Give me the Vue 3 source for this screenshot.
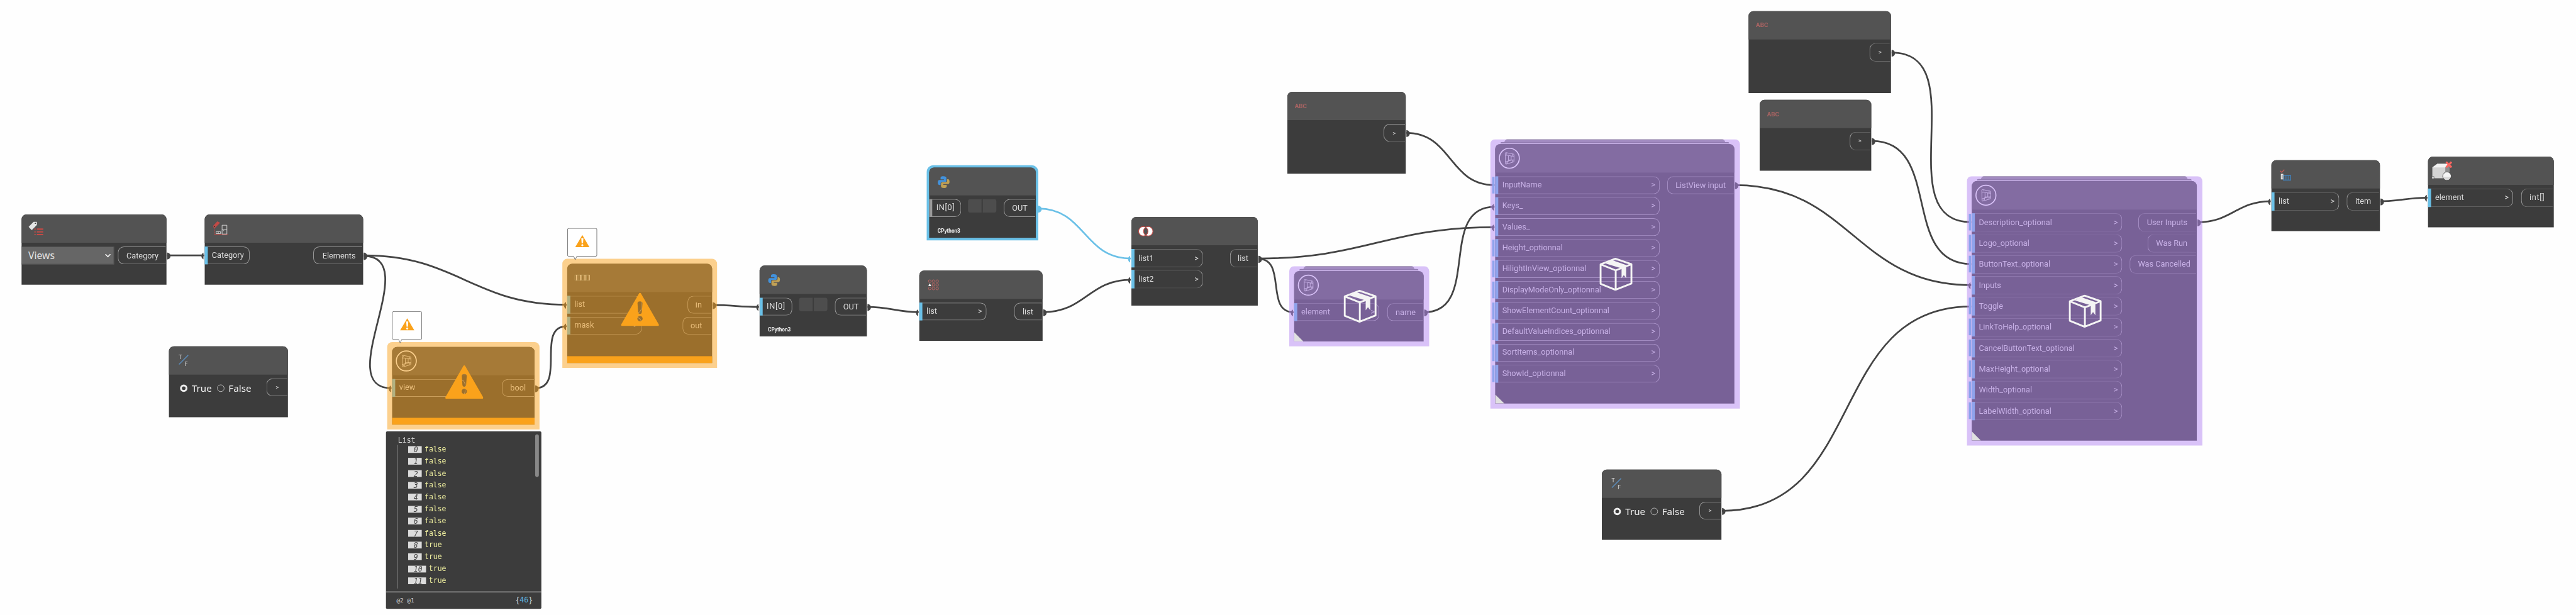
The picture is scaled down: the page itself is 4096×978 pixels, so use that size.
<script setup>
const gt = (w, n) => n.map((t) => ({ t, w, gt: true }))

const nodes = [
  { id: 'categories', x: 35, y: 348, w: 235, h: 114, icon: 'tag', select: 'Views', outs: [{ t: 'Category', w: 79, p: 13 }] },
  { id: 'elements', x: 332, y: 348, w: 257, h: 114, icon: 'cabinet', ins: [{ t: 'Category', w: 73 }], outs: [{ t: 'Elements', w: 81, p: 14 }] },
  { id: 'bool-a', x: 274, y: 562, w: 193, h: 115, icon: 'tf', radio: 'a', outs: [{ t: '>', w: 35, p: 14, sm: true }] },
  { id: 'bool-b', x: 2598, y: 762, w: 194, h: 114, icon: 'tf', radio: 'b', outs: [{ t: '>', w: 36, p: 14, sm: true }] },
  { id: 'filter', x: 920, y: 428, w: 235, h: 161, icon: 'stripes', state: 'warn', sign: [1038, 475], bubble: [920, 370],
    ins: [{ t: 'list', w: 121, gt: true }, { t: 'mask', w: 121, gt: true }], outs: [{ t: 'in', w: 40, p: 12 }, { t: 'out', w: 48, p: 12 }] },
  { id: 'is-view', x: 636, y: 563, w: 231, h: 126, icon: 'custom', state: 'warn', sign: [752.5, 593], bubble: [636, 505],
    ins: [{ t: 'view', w: 119, gt: true }], outs: [{ t: 'bool', w: 53, p: 12.5 }] },
  { id: 'python-a', x: 1232, y: 431, w: 174, h: 115, icon: 'python', engine: true, ins: [{ t: 'IN[0]', w: 53, wide: true }], outs: [{ t: 'OUT', w: 52, p: 12.5 }] },
  { id: 'python-b', x: 1507, y: 272, w: 173, h: 114, icon: 'python', engine: true, state: 'selected', ins: [{ t: 'IN[0]', w: 52, wide: true }], outs: [{ t: 'OUT', w: 52, p: 12.5 }] },
  { id: 'flatten', x: 1491, y: 439, w: 200, h: 114, icon: 'grid', ins: gt(109, ['list']), outs: [{ t: 'list', w: 46, p: 12.5 }] },
  { id: 'union', x: 1835, y: 352, w: 205, h: 144, icon: 'union', dim: true, ins: gt(116, ['list1', 'list2']), outs: [{ t: 'list', w: 45, p: 11.5 }] },
  { id: 'string-a', x: 2088, y: 149, w: 192, h: 133, icon: 'abc', outs: [{ t: '>', w: 36, p: 13.5, sm: true }] },
  { id: 'string-b', x: 2836, y: 18, w: 231, h: 133, icon: 'abc', dim: true, outs: [{ t: '>', w: 35, p: 13.5, sm: true }] },
  { id: 'string-c', x: 2854, y: 162, w: 181, h: 115, icon: 'abc', dim: true, outs: [{ t: '>', w: 35, p: 13, sm: true }] },
  { id: 'name', x: 2099, y: 440, w: 210, h: 114, icon: 'custom', state: 'package', box: [2179, 470],
    ins: gt(138, ['element']), outs: [{ t: 'name', w: 59, p: 12.5 }] },
  { id: 'list-view', x: 2425, y: 234, w: 388, h: 421, icon: 'custom', state: 'package', box: [2594, 417.5], noStub: [1, 2],
    ins: gt(267, ['InputName', 'Keys_', 'Values_', 'Height_optionnal', 'HilightInView_optionnal', 'DisplayModeOnly_optionnal', 'ShowElementCount_optionnal', 'DefaultValueIndices_optionnal', 'SortItems_optionnal', 'ShowId_optionnal']),
    outs: [{ t: 'ListView input', w: 109, p: 12.5 }] },
  { id: 'form', x: 3198, y: 294, w: 365, h: 421, icon: 'custom', state: 'package', box: [3355, 478], noStub: [3], dim: true,
    ins: gt(244, ['Description_optional', 'Logo_optional', 'ButtonText_optional', 'Inputs', 'Toggle', 'LinkToHelp_optional', 'CancelButtonText_optional', 'MaxHeight_optional', 'Width_optional', 'LabelWidth_optional']),
    outs: [{ t: 'User Inputs', w: 95, p: 13 }, { t: 'Was Run', w: 80, p: 13 }, { t: 'Was Cancelled', w: 109, p: 12.5 }] },
  { id: 'item', x: 3684, y: 260, w: 176, h: 115, icon: 'check', dim: true, ins: gt(109.5, ['list']), outs: [{ t: 'item', w: 54, p: 13 }] },
  { id: 'ids', x: 3938, y: 254, w: 204, h: 115, icon: 'cube', dim: true, ins: gt(138, ['element']), outs: [{ t: 'int[]', w: 53.5, p: 13, wide: true }] },
]

const links = [
  [271, 414.5, 331, 414.5], [590, 414.5, 919, 494.5], [590, 415.5, 635, 630], [868, 630, 919, 529.5],
  [1156, 495, 1231, 498], [1407, 498, 1490, 506.5], [1692, 506.5, 1834, 454], [1684, 338.5, 1834, 419.5, 'sel'],
  [2041, 419.5, 2424, 368.7], [2041, 420, 2098, 506.7], [2310, 506.7, 2424, 335.5], [2281, 215.7, 2424, 300.3, 'bare'],
  [2814, 300.5, 3197, 462.7], [3068, 85.3, 3197, 360.5, 'bare'], [3036, 228.8, 3197, 428.5, 'bare'],
  [2793, 829, 3197, 497.3, 'bare'], [3564, 360.7, 3683, 326.6], [3861, 326.6, 3937, 320.7],
]
const curve = ([a, b, c, d]) => {
  const k = 0.45 * Math.hypot(c - a, d - b)
  return `M${a},${b} C${a + k},${b} ${c - k},${d} ${c},${d}`
}
const head = ([a, b]) => `M${a},${b - 4.5} h1 c6,1 6,10 0,11 h-1z`
const tail = ([, , c, d]) => `M${c - 1},${d - 4.5} c-4.5,2 -4.5,9 0,11z`

const rows = ['false', 'false', 'false', 'false', 'false', 'false', 'false', 'false', 'true', 'true', 'true', 'true']
const px = (v) => v + 'px'
const rect = (n) => ({ left: px(n.x), top: px(n.y), width: px(n.w), height: px(n.h) })
const at = ([x, y]) => ({ left: px(x), top: px(y) })
</script>

<template>
  <main class="viewport">
    <div class="canvas">
      <svg class="wires" width="4178" height="998" viewBox="0 0 4178 998">
        <g v-for="(l, i) in links" :key="i" :class="['wire', { sel: l[4] === 'sel' }]">
          <path class="line" :d="curve(l)" />
          <path class="dot" :d="head(l)" />
          <path v-if="l[4] !== 'bare'" class="dot" :d="tail(l)" />
        </g>
      </svg>

      <article v-for="n in nodes" :key="n.id" :class="['node', n.state, { dim: n.dim }]" :style="rect(n)">
        <template v-if="n.state === 'package'">
          <i class="tab tab-back"></i>
          <i class="tab tab-mid"></i>
        </template>
        <div class="card">
          <header class="head">
            <svg width="60" height="46" viewBox="0 0 60 46" fill="none">
              <g v-if="n.icon === 'tag'">
                <path d="M11.4 20 L19.5 12 H24.8 V17 L16.5 25.5z" fill="#e6e6e6" />
                <circle cx="22.3" cy="14.4" r="1" fill="#444" />
                <path d="M20.8 23.8h2M24.8 23.8h10.3M20.8 28.2h2M24.8 28.2h10.3M20.8 32.6h2M24.8 32.6h10.3" stroke="#c24a46" stroke-width="2.1" />
              </g>
              <g v-else-if="n.icon === 'cabinet'">
                <path d="M14 18 L20.5 11.3 L25 13.5 L17 21.7 L14 21z" fill="#c24a46" />
                <circle cx="16" cy="19.5" r="1" fill="#333" />
                <path d="M15.8 22v10" stroke="#c24a46" stroke-dasharray="2 1" />
                <path d="M15.5 32.7h22" stroke="#c24a46" stroke-width="1.2" />
                <path d="M28.2 17.5h7.8v14.3h-7.8zM28.2 24.5h7.8M18.5 27.8h7.2v3.4h-7.2zM22 27.8v3.4M30 26.3h1.5" stroke="#d5d5d5" />
              </g>
              <g v-else-if="n.icon === 'tf'">
                <path d="M16.3 29.3 L31.3 14.2" stroke="#5b8fc0" stroke-width="1.4" />
                <text x="15.8" y="20.3" class="tf">T</text>
                <text x="25.4" y="32" class="tf">F</text>
              </g>
              <g v-else-if="n.icon === 'stripes'">
                <path d="M12.5 18.3h23.5v8.2h-23.5zM19 18v9M23 18v9M27 18v9M31 18v9" stroke="#7d9296" />
                <path d="M15.3 18v9M22 18v9M28.8 18v9M35.5 18v9" stroke="#fff" stroke-width="1.5" />
              </g>
              <g v-else-if="n.icon === 'custom'" stroke="#fff">
                <circle cx="23" cy="22.8" r="16.2" stroke-width="1.7" />
                <path stroke-width=".9" opacity=".85" d="M16.3 14.4q.3-1 1.5-.7L29.6 16q1 .3 1 1.3V27.6q0 1-1 1.3L18 32.3q-1.3.3-1.4-1zM16.4 17.8l3.6.2 8 1.5M28 16v3.500h2.600M28 25.500h2.600M28 25.500v3.500M21.500 18.800v6.800h5.500M26 19v6.600M21.500 25.600l-1.500 6M16.500 28.600l11.500-3.200" />
                <path stroke-width="1.2" d="M18 15.8h.8M28.8 17.700h.8M28.800 27.200h.8M17.800 30.500h.8" />
              </g>
              <g v-else-if="n.icon === 'python'">
                <path fill="#4292dc" d="M23 14c-4 0-4.5 1.3-4.5 3v2H24v1.2h-7.3c-2 0-2.7 1.8-2.7 4s.7 4 2.5 4h2v-2.6c0-1.5 1-2.4 2.6-2.4h4.7c1.4 0 2.2-.8 2.2-2.2v-4c0-2-1.5-3-5-3z" />
                <path fill="#bfa055" d="M24 33c4 0 4.5-1.3 4.5-3v-2H23v-1.2h7.3c2 0 2.7-1.8 2.7-4s-.7-4-2.5-4h-1.3v2.6c0 1.5-1 2.4-2.6 2.4h-4.7c-1.4 0-2.7.8-2.7 2.2v4c0 2 1.3 3 4.8 3z" />
              </g>
              <g v-else-if="n.icon === 'grid'" stroke="#b86462" stroke-width="1">
                <template v-for="x in [17, 23, 29]" :key="x">
                  <circle :cx="x" cy="17.3" r="2.2" />
                  <circle :cx="x" cy="29.2" r="2.2" />
                </template>
                <path d="M21 21.2h4v4h-4z" />
                <circle cx="29" cy="23.2" r="2.2" />
                <path d="M17 20.6l2.4 4.6h-4.8z" fill="#fff" stroke="none" />
              </g>
              <g v-else-if="n.icon === 'union'">
                <circle cx="19.3" cy="23.3" r="7.6" fill="#fff" />
                <circle cx="27.3" cy="23.3" r="7.6" fill="#fff" />
                <path d="M23.3 16.8a7.6 7.6 0 0 1 0 13a7.6 7.6 0 0 1 0-13z" fill="#535353" />
                <circle cx="19.3" cy="23.3" r="7.6" stroke="#c24a46" stroke-width="1.1" />
                <circle cx="27.3" cy="23.3" r="7.6" stroke="#c24a46" stroke-width="1.1" />
              </g>
              <text v-else-if="n.icon === 'abc'" x="12" y="26.3" class="abc">ABC</text>
              <g v-else-if="n.icon === 'check'">
                <path d="M14.3 17.3l2.4 2.4 4.3-4.5" stroke="#c85a55" stroke-width="1.3" />
                <path d="M19.3 24.8h12v7.5h-12zM22.2 24.5v8M25.2 24.5v8M28.2 24.5v8" stroke="#3f87c8" stroke-width="1.2" />
                <path d="M16 22.8h2.6v7.6h-2.6z" stroke="#eee" stroke-width="1.3" />
              </g>
              <g v-else>
                <path d="M7 17.7 L15 11.7 H35 V29 L28 35.3 H7z" fill="#d4d4d4" />
                <path d="M7 17.7 L15 11.7 H35 L28 17.7z" fill="#f2f2f2" />
                <path d="M28 17.7 L35 11.7 V29 L28 35.3z" fill="#8d8d8d" />
                <path d="M6.3 32.6h3.4v3.4h-3.4z" fill="#eee" stroke="#444" stroke-width=".7" />
                <circle cx="30.7" cy="32" r="6.8" fill="#d9d9d9" stroke="#444" />
                <path d="M24.6 33a6.2 6.2 0 1 1 12.2 0z" fill="#f5f5f5" />
                <path d="M29.5 9l8.6 8.6M38.1 9l-8.6 8.6" stroke="#fb6560" stroke-width="3.2" />
              </g>
            </svg>
          </header>
          <div class="body">
            <div v-if="n.select" class="select">
              <span>{{ n.select }}</span>
              <svg width="10" height="8" viewBox="0 0 10 8"><path d="M1 1.5l4 4 4-4" fill="none" stroke="#fff" stroke-width="1.5" /></svg>
            </div>
            <div v-if="n.radio" :class="['radios', n.radio]">
              <i class="radio on"></i><span class="yes">True</span><i class="radio"></i><span>False</span>
            </div>
            <div v-if="n.ins" class="ins">
              <div v-for="(p, i) in n.ins" :key="p.t" :class="['port', 'in', { wide: p.wide }]" :style="{ width: px(p.w) }">
                <i v-if="n.noStub && !n.noStub.includes(i)" class="stub"></i>
                <span>{{ p.t }}</span><b v-if="p.gt">&gt;</b>
              </div>
            </div>
            <div v-if="n.engine" class="buttons"><i></i><i></i></div>
            <div class="outs">
              <div v-for="p in n.outs" :key="p.t" :class="['port', 'out', { sm: p.sm, wide: p.wide }]" :style="{ width: px(p.w - 1), paddingLeft: px(p.p) }">{{ p.t }}</div>
            </div>
          </div>
          <footer v-if="n.engine" class="engine">CPython3</footer>
        </div>
        <i v-if="n.state === 'warn' || n.state === 'package'" class="veil"></i>
        <i v-if="n.state === 'warn'" class="bar"></i>
        <i v-if="n.state === 'package'" class="corner"></i>
      </article>

      <template v-for="n in nodes" :key="n.id + '-mark'">
        <svg v-if="n.sign" class="mark sign" :style="at(n.sign)" width="62" height="54" viewBox="0 0 62 54">
          <path fill="#faa21b" fill-rule="evenodd" d="M29.5 1q1.5-2 3 0L61.5 51.5q.8 2.5-1.5 2.5H2q-2.3 0-1.5-2.5zM27 17.5q-.3-3.5 4-3.5t4 3.5L34 31.5q-.3 3-3 3t-3-3zM31 37.8a4.3 4.3 0 1 0 .01 0z" />
        </svg>
        <svg v-if="n.box" class="mark" :style="at(n.box)" width="54" height="54" viewBox="0 0 54 54">
          <path fill="none" stroke="#f4f4f4" stroke-width="3" stroke-linejoin="round" d="M26 1.8L52 10.8V42L26 52.2 2 42.5V11zM2 11l24.5 9.8L52 10.8M26.5 20.8V52" />
          <path fill="#f4f4f4" d="M10 9.5L21 4.3 43.5 12V33.5L39.7 28.5 36 33.5V17.5z" />
        </svg>
        <svg v-if="n.bubble" class="mark" :style="at(n.bubble)" width="50" height="54" viewBox="0 0 50 54">
          <path fill="#fff" stroke="#777" d="M2.5.5H46q2 0 2 2V44q0 2-2 2H15.5l-2.5 5.5L10.5 46H2.5q-2 0-2-2V2.5q0-2 2-2z" />
          <path fill="#faa21b" d="M24.5 11.5L36 31H13z" />
          <path fill="#fff" d="M22.8 16.8h3.4l-.6 8.2h-2.2zM24.5 26.3a1.7 1.7 0 1 0 .01 0z" />
        </svg>
      </template>

      <section class="preview">
        <div class="scroll">
          <p class="title">List</p>
          <ol>
            <li v-for="(r, i) in rows" :key="i"><em :class="{ long: i > 9 }">{{ i }}</em><span>{{ r }}</span></li>
          </ol>
          <i class="thumb"></i>
        </div>
        <footer><span>@2 @1</span><span class="count">{<b>46</b>}</span></footer>
      </section>
    </div>
  </main>
</template>

<style>
html, body { margin: 0; background: #fefefe; overflow: hidden; }
</style>

<style scoped>
.viewport { width: 4096px; height: 978px; overflow: hidden; background: #fefefe; }
.canvas { position: relative; width: 4178px; height: 998px; transform: scale(0.98037, 0.97996); transform-origin: 0 0; font-family: Roboto, sans-serif; font-size: 13px; color: #dcdcdc; }
.canvas * { box-sizing: border-box; }
.wires { position: absolute; inset: 0; }
.line { fill: none; stroke: #444; stroke-width: 2.8; }
.dot { fill: #444; }
.sel .line { stroke: #6ac0e7; }
.sel .dot { fill: #6ac0e7; }

.node { position: absolute; }
.card { height: 100%; background: #3c3c3c; border-radius: 8px 8px 0 0; position: relative; }
.selected::before { content: ''; position: absolute; inset: -4px; background: #6ac0e7; border-radius: 11px 11px 0 0; }
.head { height: 46px; background: #535353; border-radius: 8px 8px 0 0; }
.head svg { display: block; }
.selected .head { height: 45px; overflow: hidden; }
.body { display: flex; padding-top: 6px; }
.ins, .outs { display: flex; flex-direction: column; gap: 5px; }
.outs { margin-left: auto; margin-right: 1px; align-items: flex-end; }
.port { height: 29px; border: 1px solid #9a9a9a; line-height: 28px; white-space: nowrap; position: relative; }
.in { display: flex; justify-content: space-between; padding: 0 6px 0 11.5px; border-left: 0; border-radius: 0 10px 10px 0; line-height: 25.5px; }
.in::before { content: ''; position: absolute; left: 0; top: -1px; bottom: -1px; width: 5px; background: #6ac0e7; }
.in b { font-weight: 400; }
.out { border-right: 0; border-radius: 10px 0 0 10px; }
.wide { letter-spacing: 0.65px; }
.sm { font-size: 10px; }
.dim .ins, .dim .outs { gap: 4px; }
.dim .port { height: 30px; border-top-color: #6a6a6a; border-bottom-color: #6a6a6a; }
.dim .in { line-height: 28px; }
.selected .in::before { background: #999; }
.stub { position: absolute; left: -5px; top: 0; width: 4px; height: 27px; background: #6ac0e7; }

.tf { font: 9.5px "Noto Sans", sans-serif; fill: #dadada; }
.abc { font: 700 10px Roboto, sans-serif; fill: #ab6463; }

.select { width: 150px; height: 29px; background: #666; border: 1px solid #555; border-left: 0; padding: 0 4px 0 11px; display: flex; align-items: center; justify-content: space-between; font: 16px/29px "Noto Sans", sans-serif; color: #e4e4e4; }
.radios { display: flex; align-items: center; height: 29px; margin: 1.5px 0 0 18px; font: 15.5px/29px "Noto Sans", sans-serif; color: #eee; }
.radios.b { margin-left: 19px; }
.radio { width: 12px; height: 12px; border: 1px solid #bbb; border-radius: 50%; margin-right: 7px; }
.radio.on { border: 3.5px solid #eee; }
.yes { margin-right: 8px; }
.buttons { display: flex; gap: 2px; margin-left: 11px; }
.buttons i { width: 22px; height: 22px; background: #4d4d4d; border-radius: 4px 0 0 4px; }
.buttons i + i { border-radius: 0 4px 4px 0; }
.engine { margin: 15px 0 0 13.5px; font: 700 8.4px/16px Roboto, sans-serif; color: #f0f0f0; }

.veil { position: absolute; inset: -8px; border-radius: 8px 8px 0 0; }
.warn .veil { background: rgba(250, 162, 27, 0.5); }
.package .veil { background: rgba(179, 133, 242, 0.5); inset: -8px -8.5px -8px -8px; }
.bar { position: absolute; left: 0; right: 0; bottom: 0; height: 11.5px; background: #faa21b; }
.tab { position: absolute; border-radius: 7px 7px 0 0; }
.tab-back { left: 15px; right: 15px; top: -8px; height: 4.5px; background: #909090; }
.tab-mid { left: 8px; right: 8px; top: -4px; height: 4px; background: #727272; border-bottom: 1px solid #fff; border-radius: 4px 4px 0 0; }
.corner { position: absolute; left: 0; bottom: 0; width: 15px; height: 15px; background: #e0e0e0; clip-path: polygon(0 0, 100% 100%, 0 100%); }
.mark { position: absolute; }
.sign { transform: translateX(-31px); }

.preview { position: absolute; left: 626px; top: 700px; width: 252px; height: 288px; background: #3c3c3c; border-radius: 2px; font-family: "DejaVu Sans Mono", monospace; font-size: 11.7px; }
.scroll { position: relative; height: 261px; border-bottom: 1.5px solid #ddd; padding: 6px 0 0 18px; }
.title { margin: 0 0 0 1.5px; line-height: 16px; color: #d6d6d6; }
ol { list-style: none; margin: 0; padding: 0 0 0 17px; border-left: 1px solid #888; height: 233px; }
li { display: flex; height: 19.36px; line-height: 15px; }
em { width: 22px; height: 11px; margin: 2px 4.5px 0 0; padding-left: 9px; background: #dcdcdc; color: #444; line-height: 12px; }
em.long { width: 29px; }
li span { color: #efef9f; }
.thumb { position: absolute; right: 4px; top: 5px; width: 6px; height: 69px; border-radius: 3px; background: #888; }
.preview footer { display: flex; justify-content: space-between; align-items: center; height: 26px; padding: 0 14px 0 17px; font-size: 9.6px; color: #d6d6d6; }
.count { font-size: 11.7px; }
.count b { font-weight: 400; color: #5fb5e2; }
</style>
